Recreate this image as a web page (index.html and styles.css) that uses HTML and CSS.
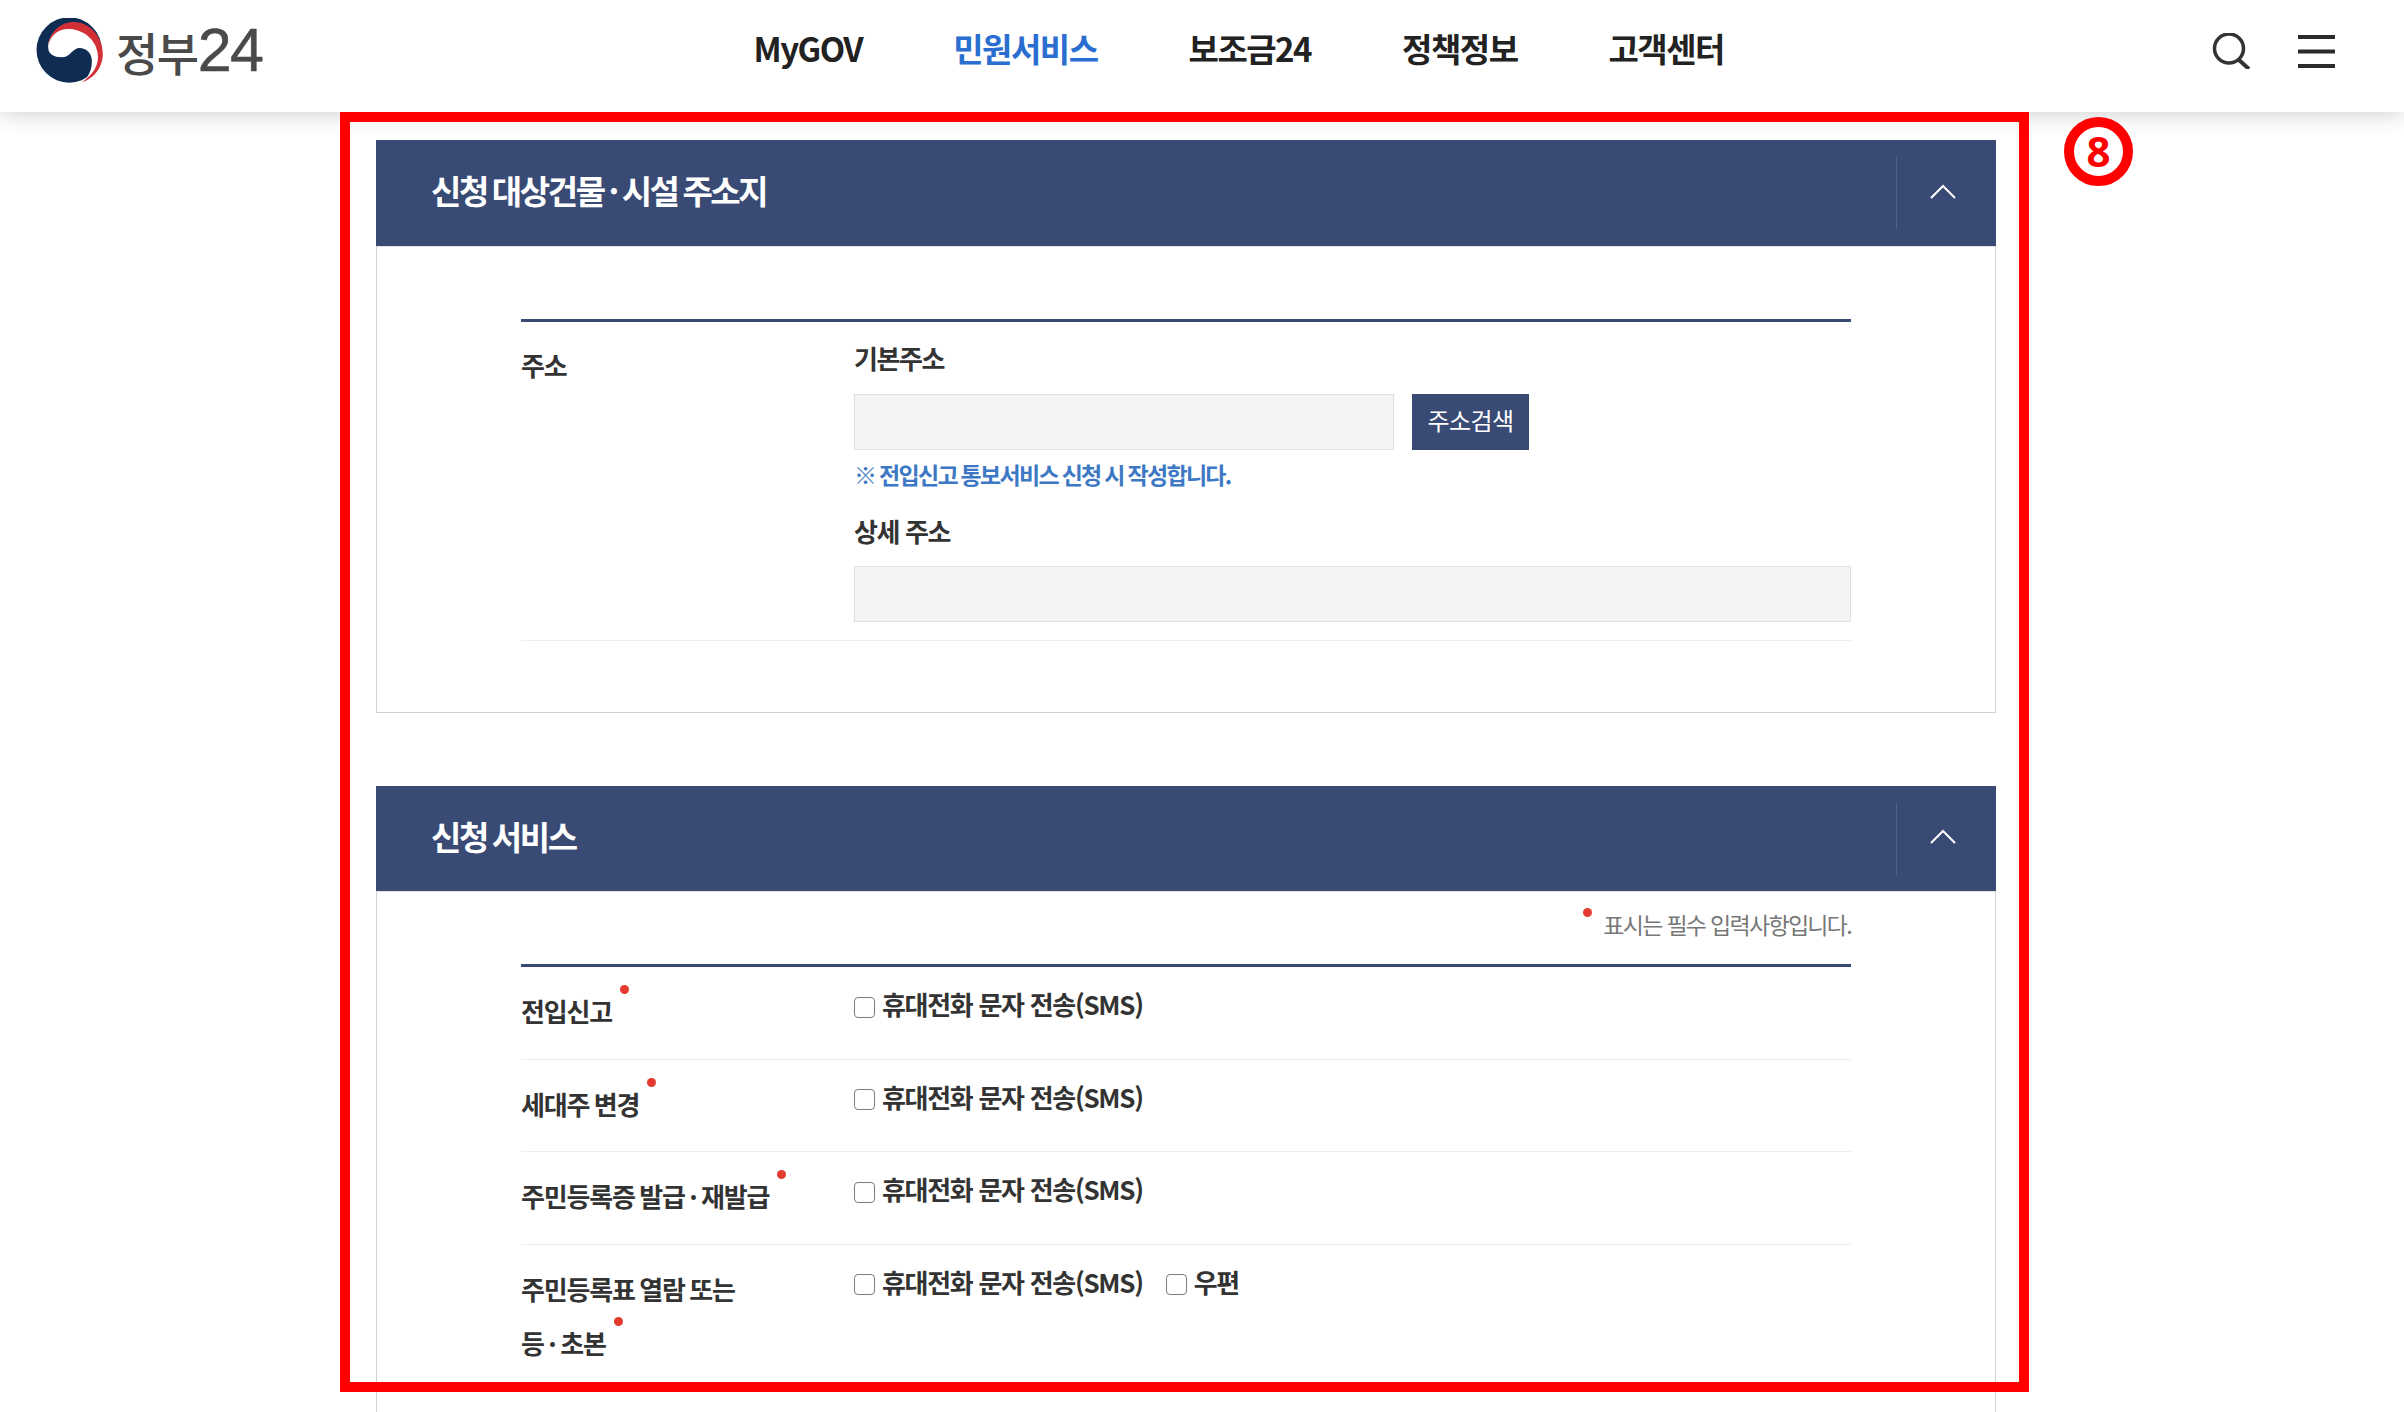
FILE: index.html
```html
<!DOCTYPE html>
<html lang="ko">
<head>
<meta charset="utf-8">
<title>정부24</title>
<link rel="stylesheet" href="styles.css">
</head>
<body>
<header class="topbar">
  <a class="logo">
    <svg class="logo-mark" viewBox="48 42 200 195" width="67" height="65" aria-hidden="true">
      <circle cx="147" cy="138" r="98" fill="#0f2c52"/>
      <path fill="#fff" d="M84 130C84 90 120 60 150 60C215 60 246 105 246 150C246 190 220 225 185 235C205 222 216 195 215 170C215 145 195 130 175 132C155 135 150 160 125 160C100 160 84 150 84 130Z"/>
      <path fill="#d32f37" d="M84 125C90 80 125 54 160 54C215 54 248 105 248 150C248 190 220 225 185 235C215 215 240 185 232 145C225 105 190 78 150 75C115 72 90 95 84 125Z"/>
    </svg>
    <span class="logo-ko">정부</span><span class="logo-num">24</span>
  </a>
  <nav class="gnb">
    <a>MyGOV</a>
    <a class="on">민원서비스</a>
    <a>보조금24</a>
    <a>정책정보</a>
    <a>고객센터</a>
  </nav>
  <div class="tools">
    <svg width="38" height="36" viewBox="0 0 38 36" aria-hidden="true"><circle cx="17" cy="15.500" r="14.500" fill="none" stroke="#333" stroke-width="3.500"/><path d="M27 27L37 36" stroke="#333" stroke-width="4" fill="none"/></svg>
    <svg class="menu-icon" width="37" height="33" viewBox="0 0 37 33" aria-hidden="true"><path d="M0 2H37M0 16.500H37M0 31H37" stroke="#2b2b2b" stroke-width="4" fill="none"/></svg>
  </div>
</header>

<main class="content">
  <section class="panel">
    <div class="panel-head">
      <h2>신청 대상건물 · 시설 주소지</h2>
      <span class="toggle"><svg width="26" height="15" viewBox="0 0 26 15" aria-hidden="true"><path d="M1 14L13 2L25 14" fill="none" stroke="#fff" stroke-width="2"/></svg></span>
    </div>
    <div class="panel-body first">
      <div class="form-table">
        <div class="row addr">
          <div class="label">주소</div>
          <div class="value">
            <div class="sub-title">기본주소</div>
            <div class="search-line">
              <span class="field short"></span>
              <button class="btn" type="button">주소검색</button>
            </div>
            <p class="notice">※ 전입신고 통보서비스 신청 시 작성합니다.</p>
            <div class="sub-title second">상세 주소</div>
            <span class="field"></span>
          </div>
        </div>
      </div>
    </div>
  </section>

  <section class="panel last">
    <div class="panel-head">
      <h2>신청 서비스</h2>
      <span class="toggle"><svg width="26" height="15" viewBox="0 0 26 15" aria-hidden="true"><path d="M1 14L13 2L25 14" fill="none" stroke="#fff" stroke-width="2"/></svg></span>
    </div>
    <div class="panel-body">
      <p class="required-note"><i class="dot"></i>표시는 필수 입력사항입니다.</p>
      <div class="form-table">
        <div class="row">
          <div class="label"><span class="req">전입신고</span></div>
          <div class="value checks"><label><input type="checkbox">휴대전화 문자 전송(SMS)</label></div>
        </div>
        <div class="row">
          <div class="label"><span class="req">세대주 변경</span></div>
          <div class="value checks"><label><input type="checkbox">휴대전화 문자 전송(SMS)</label></div>
        </div>
        <div class="row">
          <div class="label"><span class="req">주민등록증 발급 · 재발급</span></div>
          <div class="value checks"><label><input type="checkbox">휴대전화 문자 전송(SMS)</label></div>
        </div>
        <div class="row final">
          <div class="label"><span class="req">주민등록표 열람 또는<br>등 · 초본</span></div>
          <div class="value checks"><label><input type="checkbox">휴대전화 문자 전송(SMS)</label><label><input type="checkbox">우편</label></div>
        </div>
      </div>
    </div>
  </section>
</main>

<div class="callout-frame"></div>
<div class="callout-badge">8</div>
</body>
</html>
```

FILE: styles.css
```css
* { box-sizing: border-box; }
html, body { margin: 0; padding: 0; height: 1412px; overflow: hidden; }
body {
  display: flex;
  flex-direction: column;
  background: #fff;
  color: #333;
  font-family: "Noto Sans CJK KR", "Noto Sans", sans-serif;
}

.topbar {
  position: relative;
  z-index: 2;
  flex: 0 0 112px;
  display: flex;
  align-items: flex-start;
  padding-left: 36px;
  background: #fff;
  box-shadow: 0 2px 20px rgba(40, 40, 60, .22);
}
.logo {
  display: flex;
  align-items: center;
  height: 63px;
  margin-top: 19px;
  color: #4a4a4a;
}
.logo-mark { margin-right: 13px; }
.logo-ko { font-size: 46px; font-weight: 500; letter-spacing: -1.5px; line-height: 1; }
.logo-num { font-family: "Liberation Sans", sans-serif; font-size: 61px; letter-spacing: -1.5px; line-height: 1; -webkit-text-stroke: .5px #4a4a4a; }

.gnb {
  display: flex;
  gap: 91px;
  margin-left: 491px;
  margin-top: 25px;
  font-size: 33px;
  font-weight: 700;
  line-height: 46px;
  letter-spacing: -1.5px;
  color: #222;
}
.gnb .on { color: #2a6ed0; }

.tools {
  display: flex;
  align-items: flex-start;
  gap: 48px;
  margin-left: auto;
  margin-top: 33px;
  padding-right: 69px;
}
.menu-icon { margin-top: 2px; }

.content {
  flex: 1;
  min-height: 0;
  display: flex;
  flex-direction: column;
  width: 1996px;
  padding: 28px 0 0 376px;
}
.panel { margin-bottom: 73px; }
.panel.last { flex: 1; min-height: 0; display: flex; flex-direction: column; margin-bottom: 0; }
.panel-head {
  flex: none;
  display: flex;
  align-items: center;
  justify-content: space-between;
  height: 106px;
  padding-left: 55px;
  background: #394b74;
  color: #fff;
}
.panel.last .panel-head { height: 105px; }
.panel-head h2 {
  margin: 0 0 6px;
  font-size: 33px;
  font-weight: 700;
  letter-spacing: -2.4px;
  word-spacing: -2px;
}
.toggle {
  display: flex;
  align-items: center;
  justify-content: center;
  width: 100px;
  height: 72px;
  padding-right: 7px;
  padding-bottom: 4px;
  border-left: 1px solid #50618a;
}
.panel-body {
  padding: 0 144px;
  border: 1px solid #d0d0d0;
  border-top-color: #e2e2e2;
}
.panel.last .panel-body { flex: 1; min-height: 0; border-bottom: 0; }
.panel-body.first { padding-top: 72px; padding-bottom: 71px; }

.required-note {
  display: flex;
  justify-content: flex-end;
  margin: 0;
  padding: 15px 0 23px;
  font-size: 23px;
  line-height: 34px;
  letter-spacing: -1.7px;
  color: #777;
}
.dot {
  width: 9px;
  height: 9px;
  margin: 1px 11px 0 0;
  border-radius: 50%;
  background: #e53a2f;
}

.form-table { border-top: 3px solid #394b74; }
.row {
  display: flex;
  padding: 16px 0 21.5px;
  border-bottom: 1px solid #eee;
}
.row.addr { padding: 13px 0 18px; }
.row.final { border-bottom: 0; padding-bottom: 0; }
.label {
  flex: 0 0 333px;
  margin-top: 1px;
  margin-bottom: -1px;
  font-size: 26px;
  font-weight: 700;
  line-height: 54px;
  letter-spacing: -1.2px;
  word-spacing: -1.5px;
}
.addr .label { margin-top: 3px; margin-bottom: 0; }
.req { position: relative; padding-right: 17px; }
.req::after {
  content: "";
  position: absolute;
  right: 0;
  bottom: 35px;
  width: 9px;
  height: 9px;
  border-radius: 50%;
  background: #e53a2f;
}
.value { flex: 1; min-width: 0; }
.sub-title {
  font-size: 26px;
  font-weight: 700;
  line-height: 46px;
  letter-spacing: -1.4px;
}
.sub-title.second { margin-top: 14px; }
.search-line { display: flex; gap: 18px; margin-top: 13px; }
.field {
  display: block;
  height: 56px;
  background: #f4f4f4;
  border: 1px solid #e0e0e0;
}
.sub-title.second + .field { margin-top: 12px; }
.field.short { width: 540px; }
.btn {
  width: 117px;
  height: 56px;
  padding: 0 0 4px;
  border: 0;
  background: #394b74;
  color: #fff;
  font: 400 24px/1 "Noto Sans CJK KR", sans-serif;
  letter-spacing: -.6px;
}
.notice {
  margin: 4px 0 0;
  font-size: 23px;
  font-weight: 700;
  line-height: 40px;
  letter-spacing: -1.7px;
  word-spacing: -1px;
  color: #3d78c4;
}
.checks {
  display: flex;
  align-items: flex-start;
  gap: 23px;
  margin-top: -2px;
  font-size: 26px;
  font-weight: 700;
  line-height: 46px;
  letter-spacing: -1.3px;
}
.checks label { display: flex; align-items: center; }
.checks input {
  appearance: none;
  width: 21px;
  height: 21px;
  margin: 6px 7px 0 0;
  background: #fff;
  border: 1.5px solid #7d7d7d;
  border-radius: 4px;
}

.callout-frame {
  position: absolute;
  left: 340px;
  top: 112px;
  width: 1689px;
  height: 1280px;
  border: 10px solid #f00;
  z-index: 3;
}
.callout-badge {
  position: absolute;
  left: 2064px;
  top: 117px;
  width: 69px;
  height: 69px;
  border: 10px solid #f00;
  border-radius: 50%;
  background: #fff;
  color: #f00;
  font: 700 42px/47px "Noto Sans", sans-serif;
  text-align: center;
  z-index: 3;
}
```
